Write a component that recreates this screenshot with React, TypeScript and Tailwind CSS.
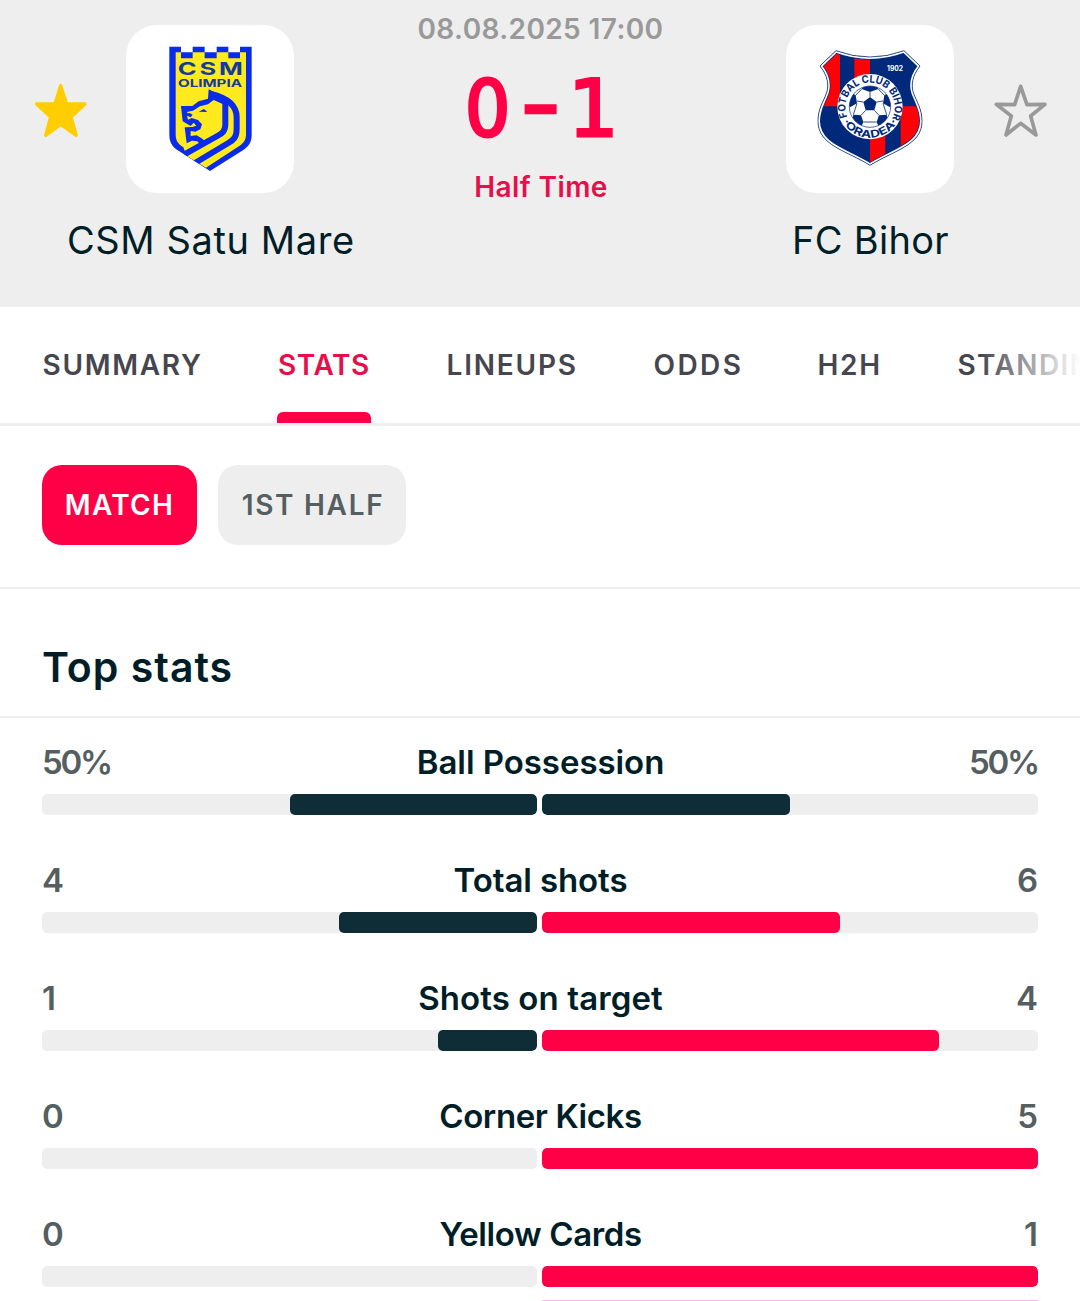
import React from "react";

const tabs = [
  { label: "SUMMARY", width: "w-[236px]", spacing: "tracking-[1.7px]", active: false },
  { label: "STATS", width: "w-[168px]", spacing: "tracking-[0.6px]", active: true },
  { label: "LINEUPS", width: "w-[207px]", spacing: "tracking-[1.8px]", active: false },
  { label: "ODDS", width: "w-[164px]", spacing: "tracking-[2.4px]", active: false },
  { label: "H2H", width: "w-[140px]", spacing: "tracking-[1.7px]", active: false },
  { label: "STANDINGS", width: "w-[210px]", spacing: "tracking-[1.4px]", active: false },
];

const stats = [
  { label: "Ball Possession", home: "50%", away: "50%", homePct: 50, awayPct: 50, spacing: "tracking-[-0.05px]" },
  { label: "Total shots", home: "4", away: "6", homePct: 40, awayPct: 60, spacing: "tracking-[-0.1px]" },
  { label: "Shots on target", home: "1", away: "4", homePct: 20, awayPct: 80, spacing: "tracking-[0.1px]" },
  { label: "Corner Kicks", home: "0", away: "5", homePct: 0, awayPct: 100, spacing: "tracking-[-0.4px]" },
  { label: "Yellow Cards", home: "0", away: "1", homePct: 0, awayPct: 100, spacing: "tracking-[-0.4px]" },
];

const OlimpiaCrest = () => (
  <svg viewBox="18 15 504 504" className="h-full w-full" aria-hidden="true">
    <defs>
      <clipPath id="olimpia">
        <path d="M148 80V345C148 368 158 382 178 394L270 453L364 394C385 381 395 368 395 345V80Z" />
      </clipPath>
    </defs>
    <path
      fill="#0a2bea"
      d="M148 80H183V97H218V80H254V97H290V80H325V97H360V80H395V345C395 368 385 381 364 394L270 453L178 394C158 382 148 368 148 345Z"
    />
    <path
      fill="#ffea1f"
      d="M167 97H183V115H218V97H254V115H290V97H325V115H360V97H378V343C378 362 369 372 352 382L258 443L200 407L190 382C174 372 167 362 167 343Z"
    />
    <g clipPath="url(#olimpia)" fill="none" stroke="#0a2bea" strokeWidth="18">
      <path d="M316 240V313C316 333 308 339 292 348L192 404" />
      <path d="M272 222C315 232 350 250 350 292V327C350 351 342 359 325 369L220 432" />
    </g>
    <g fill="#0a2bea">
      <path d="M266 208L335 243L316 256L281 240L264 253L240 259L219 272L203 275L201 280L209 279L218 284L212 292L201 287L204 299L215 294L234 300L246 313L241 328L226 335L212 333L212 348L230 346L247 356L258 367L244 377L232 364L216 362L200 370L194 322L217 321L229 317L221 308L212 318L188 304L183 258L217 258L236 244L264 236Z" />
      <path d="M236 275L252 267L262 276Z" />
    </g>
    <text x="173" y="165" textLength="204" lengthAdjust="spacingAndGlyphs" className="fill-[#123b9c] font-['Inter'] text-[54px] font-bold tracking-[6px]">CSM</text>
    <text x="174" y="200" textLength="192" lengthAdjust="spacingAndGlyphs" className="fill-[#123b9c] font-['Inter'] text-[33px] font-bold">OLIMPIA</text>
  </svg>
);

const BIHOR_SHIELD =
  "M168 92Q270 130 372 92L420 138C396 168 393 196 400 218C410 246 426 266 426 304C426 376 340 392 270 436C200 392 114 376 114 304C114 266 130 246 140 218C147 196 144 168 120 138Z";

const BihorCrest = () => (
  <svg viewBox="18 15 504 504" className="h-full w-full" aria-hidden="true">
    <defs>
      <clipPath id="bihor">
        <path d={BIHOR_SHIELD} />
      </clipPath>
      <clipPath id="ball">
        <circle cx="270" cy="260" r="62" />
      </clipPath>
      <path id="arcTop" d="M202 291A74 74 0 1 1 338 291" />
      <path id="arcBottom" d="M177 260A93 93 0 0 0 363 260" />
    </defs>
    <g clipPath="url(#bihor)">
      <path fill="#00297c" d="M100 80H440V450H100Z" />
      <path fill="#fb0207" d="M100 80H180V259H100ZM223 80H270V259H223ZM270 259H316V450H270ZM362 259H440V450H362Z" />
      <path d={BIHOR_SHIELD} fill="none" stroke="#00297c" strokeWidth="16" />
      <path d={BIHOR_SHIELD} fill="none" stroke="#fff" strokeWidth="12" />
    </g>
    <path d={BIHOR_SHIELD} fill="none" stroke="#1c4085" strokeWidth="2.5" />
    <circle cx="270" cy="260" r="98" fill="#fff" />
    <g clipPath="url(#ball)">
      <circle cx="270" cy="260" r="62" fill="#fff" />
      <g fill="#00297c">
        <path d="M270 231L290 246L283 271H257L250 246Z" />
        <path d="M245 207L270 216L295 207L284 190H256Z" />
        <path d="M313 226L309 250L330 262L345 240L330 215Z" />
        <path d="M227 226L231 250L210 262L195 240L210 215Z" />
        <path d="M290 306L297 286L320 284L325 310L300 330Z" />
        <path d="M250 306L243 286L220 284L215 310L240 330Z" />
      </g>
      <path
        fill="none"
        stroke="#00297c"
        strokeWidth="2.5"
        d="M270 231V216M290 246L309 243M283 271L297 286M257 271L243 286M250 246L231 243M295 207L313 226M245 207L227 226M309 250L320 284M231 250L220 284M290 306H250"
      />
    </g>
    <circle cx="270" cy="260" r="62" fill="none" stroke="#00297c" strokeWidth="2" />
    <text className="fill-[#00297c] font-['Inter'] text-[31px] font-bold">
      <textPath href="#arcTop" textLength="298" lengthAdjust="spacingAndGlyphs">FOTBAL CLUB BIHOR</textPath>
    </text>
    <text className="fill-[#00297c] font-['Inter'] text-[31px] font-bold">
      <textPath href="#arcBottom" startOffset="46" textLength="200" lengthAdjust="spacingAndGlyphs">·ORADEA·</textPath>
    </text>
    <text x="321" y="152" textLength="48" lengthAdjust="spacingAndGlyphs" className="fill-white font-['Inter'] text-[21px] font-bold">1902</text>
  </svg>
);

const Star = ({ filled }: { filled: boolean }) => (
  <svg viewBox="103 67 160 165" className="h-[55px] w-[53.3px]" aria-hidden="true">
    {filled ? (
      <path
        d="M183 75L201 129L256 130L214 169L230 224L183 191L138 224L153 169L111 130L166 129Z"
        fill="#ffcd00"
        stroke="#ffcd00"
        strokeWidth="10"
        strokeLinejoin="round"
      />
    ) : (
      <path
        d="M183 77L202 132L256 131L213 166L229 223L183 188L139 223L155 166L110 131L165 132Z"
        fill="none"
        stroke="#999"
        strokeWidth="11"
        strokeLinejoin="round"
      />
    )}
  </svg>
);

const StatBar = ({ pct, side }: { pct: number; side: "home" | "away" }) => {
  const leading = pct > 50;
  return (
    <div className={`flex h-[21px] overflow-hidden rounded-[5px] bg-[#eee] ${side === "home" ? "w-[495px] justify-end" : "w-[496px] justify-start"}`}>
      <div className={`h-full rounded-[5px] ${leading ? "bg-[#ff0046]" : "bg-[#0f2d37]"}`} style={{ width: `${pct}%` }} />
    </div>
  );
};

const App = () => {
  return (
    <div className="h-[1301px] w-[1080px] overflow-hidden bg-white font-['Inter',sans-serif] text-[#001e28]">
      {/* Match header */}
      <header className="flex h-[307px] bg-[#eee]">
        <div className="flex w-[420px] flex-col">
          <div className="flex pt-[25px]">
            <div className="flex w-[126px] pt-[58px] pl-[34px]">
              <Star filled />
            </div>
            <div className="h-[168px] w-[168px] overflow-hidden rounded-[31px] bg-white">
              <OlimpiaCrest />
            </div>
          </div>
          <div className="mt-[24px] pl-[67px] text-[38px] leading-[46px] tracking-[0.6px] whitespace-nowrap">CSM Satu Mare</div>
        </div>

        <div className="flex w-[241px] flex-col items-center whitespace-nowrap">
          <div className="mt-[12px] text-[28px] leading-[34px] font-semibold tracking-[0.4px] text-[#999]">08.08.2025 17:00</div>
          <div className="mt-[21px] flex h-[84px] items-center font-['DejaVu_Sans_Condensed','DejaVu_Sans',sans-serif] text-[79px] leading-[84px] text-[#ff0046] [-webkit-text-stroke:3px_#ff0046]">
            <span className="flex w-[52px] justify-center">0</span>
            <span className="flex w-[54px] justify-center pb-[11px] text-[76px] [-webkit-text-stroke:4.5px_#ff0046]">–</span>
            <span className="flex w-[52px] justify-center font-['DejaVu_Sans',sans-serif]">1</span>
          </div>
          <div className="mt-[19px] pl-px text-[28px] leading-[34px] font-semibold tracking-[0.4px] text-[#e60f4b]">Half Time</div>
        </div>

        <div className="flex w-[419px] flex-col">
          <div className="flex pt-[25px] pl-[125px]">
            <div className="h-[168px] w-[168px] overflow-hidden rounded-[31px] bg-white">
              <BihorCrest />
            </div>
            <div className="flex pt-[57.5px] pl-[39.5px]">
              <Star filled={false} />
            </div>
          </div>
          <div className="mt-[24px] pl-[131px] text-[38px] leading-[46px] tracking-[0.3px] whitespace-nowrap">FC Bihor</div>
        </div>
      </header>

      {/* Tabs */}
      <nav className="relative flex h-[119px] overflow-hidden border-b-[3px] border-[#eee] pl-[42.5px] text-[28px] font-semibold text-[#46464f]">
        {tabs.map((tab) => (
          <div key={tab.label} className={`flex shrink-0 ${tab.width} ${tab.spacing}`}>
            <div className={`flex flex-col justify-between ${tab.active ? "-ml-[1.5px] w-[94px] text-[#e60f4b]" : ""}`}>
              <span className={`mt-[41px] leading-[34px] ${tab.active ? "pl-[1px]" : ""}`}>{tab.label}</span>
              {tab.active && <span className="h-[11.5px] rounded-t-[6px] bg-[#ff0046]" />}
            </div>
          </div>
        ))}
        <div className="absolute top-0 right-0 h-[116px] w-[100px] bg-linear-to-r from-white/0 to-white" />
      </nav>

      {/* Period filter */}
      <div className="flex h-[163px] gap-[21px] border-b-2 border-[#eee] pt-[38.5px] pl-[42px] text-[28px] font-semibold">
        <button className="flex h-[80px] w-[155px] items-center justify-center rounded-[20px] bg-[#ff0046] tracking-[1.3px] text-white">MATCH</button>
        <button className="flex h-[80px] w-[188px] items-center justify-center rounded-[20px] bg-[#eee] pl-[2px] tracking-[1.7px] whitespace-nowrap text-[#555e61]">1ST HALF</button>
      </div>

      <h2 className="flex h-[129px] border-b-2 border-[#eee] pt-[53px] pl-[42px] text-[41px] leading-[50px] font-semibold tracking-[1px]">
        Top stats
      </h2>

      {/* Stat rows */}
      <div className="px-[42px]">
        {stats.map((stat) => (
          <div key={stat.label} className="h-[118px] pt-[24px] last:h-[110px]">
            <div className="grid h-[40px] grid-cols-[1fr_auto_1fr] text-[33px] leading-[40px] font-semibold">
              <span className={`text-[#555e61] ${stat.home.length > 1 ? "tracking-[-2.2px]" : ""}`}>{stat.home}</span>
              <span className={`pl-px ${stat.spacing}`}>{stat.label}</span>
              <span className={`text-right text-[#555e61] ${stat.away.length > 1 ? "tracking-[-2.2px]" : ""}`}>{stat.away}</span>
            </div>
            <div className="mt-[12px] flex gap-[5px]">
              <StatBar pct={stat.homePct} side="home" />
              <StatBar pct={stat.awayPct} side="away" />
            </div>
          </div>
        ))}
      </div>
      {/* Top edge of the next block */}
      <div className="ml-[542px] h-px w-[496px] bg-[#ffb3f0]" />
    </div>
  );
};

export default App;
